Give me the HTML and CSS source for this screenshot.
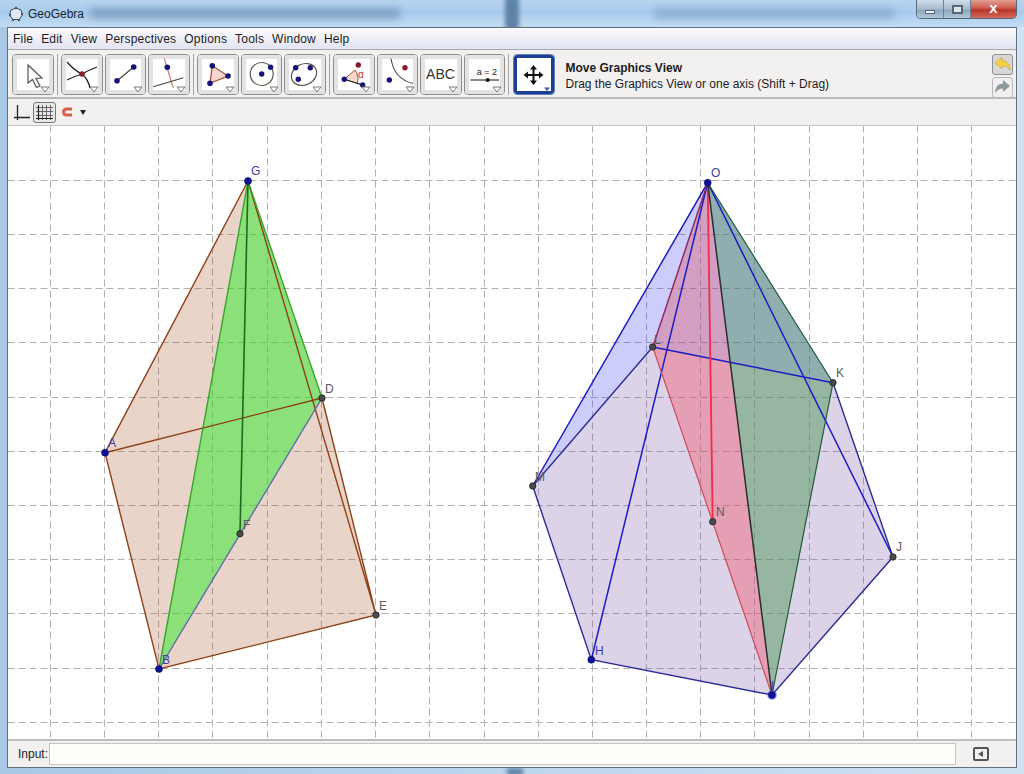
FILE: index.html
```html
<!DOCTYPE html>
<html lang="en">
<head>
  <meta charset="UTF-8">
  <title>GeoGebra</title>
  <link rel="stylesheet" href="styles.css">
</head>
<body>
  <div class="titlebar">
    <svg class="app-icon" width="16" height="16" viewBox="0 0 16 16">
      <path d="M8 2 L13 4 L14.5 9 L11 13.5 L5 13.5 L1.5 9 L3 4 Z" fill="#dfe8f2" stroke="#3c4a5c"/>
      <circle cx="8" cy="2" r="1.2" fill="#4a5a70"/><circle cx="14" cy="8" r="1.2" fill="#4a5a70"/>
      <circle cx="2" cy="9" r="1.2" fill="#4a5a70"/><circle cx="5" cy="14" r="1.2" fill="#4a5a70"/>
      <circle cx="11" cy="14" r="1.2" fill="#4a5a70"/>
    </svg>
    <span class="app-title">GeoGebra</span>
    <span class="smudge smudge-a"></span>
    <span class="stripe"></span>
    <span class="smudge smudge-b"></span>
    <div class="win-controls">
      <span class="win-btn win-min"><i></i></span>
      <span class="win-btn win-max"><i></i></span>
      <span class="win-btn win-close">x</span>
    </div>
  </div>

  <div class="frame">
    <div class="menubar">
      <span>File</span><span>Edit</span><span>View</span><span>Perspectives</span>
      <span>Options</span><span>Tools</span><span>Window</span><span>Help</span>
    </div>

    <div class="toolbar">
      <button class="tool"><svg viewBox="1 1 39.5 39">
        <path d="M16 11 V29 L20.5 25.5 L24.5 33.5 L28 32 L24 24.5 L30 24 Z" fill="#fff" stroke="#555" stroke-width="1.2"/>
        <polygon class="caret" points="29,33 37,33 33,38"/></svg></button>
      <span class="sep"></span>
      <button class="tool"><svg viewBox="1 1 39.5 39">
        <path d="M6 8 Q14 17 21 20 Q27 25 29 34" fill="none" stroke="#222" stroke-width="1.3"/>
        <path d="M6 26 Q14 22 21 20 Q28 16 36 13" fill="none" stroke="#222" stroke-width="1.3"/>
        <circle cx="21" cy="20" r="2.8" fill="#8c1c2c"/>
        <polygon class="caret" points="29,33 37,33 33,38"/></svg></button>
      <button class="tool"><svg viewBox="1 1 39.5 39">
        <path d="M12 26.7 L28.7 13" stroke="#444" stroke-width="1.2"/>
        <circle cx="12" cy="26.7" r="2.8" fill="#14147a"/><circle cx="28.7" cy="13" r="2.8" fill="#14147a"/>
        <polygon class="caret" points="29,33 37,33 33,38"/></svg></button>
      <button class="tool"><svg viewBox="1 1 39.5 39">
        <path d="M16.3 4.5 L25.3 34" stroke="#d68a80" stroke-width="1.3"/>
        <path d="M5.3 32.7 L35.3 23.7" stroke="#444" stroke-width="1.2"/>
        <circle cx="19.3" cy="13.3" r="2.8" fill="#14147a"/>
        <polygon class="caret" points="29,33 37,33 33,38"/></svg></button>
      <span class="sep"></span>
      <button class="tool"><svg viewBox="1 1 39.5 39">
        <polygon points="15.3,11.7 31,22 13,29.3" fill="#f6d6d0" stroke="#a8563c" stroke-width="1.3"/>
        <circle cx="15.3" cy="11.7" r="2.8" fill="#14147a"/><circle cx="31" cy="22" r="2.8" fill="#14147a"/>
        <circle cx="13" cy="29.3" r="2.8" fill="#14147a"/>
        <polygon class="caret" points="29,33 37,33 33,38"/></svg></button>
      <button class="tool"><svg viewBox="1 1 39.5 39">
        <circle cx="20.7" cy="20" r="11.5" fill="none" stroke="#5c5444" stroke-width="1.2"/>
        <circle cx="20.7" cy="20" r="2.7" fill="#14147a"/><circle cx="29.6" cy="13.3" r="2.7" fill="#14147a"/>
        <polygon class="caret" points="29,33 37,33 33,38"/></svg></button>
      <button class="tool"><svg viewBox="1 1 39.5 39">
        <ellipse cx="20" cy="20.5" rx="13" ry="10.5" transform="rotate(-25 20 20.5)" fill="none" stroke="#5c5444" stroke-width="1.2"/>
        <circle cx="11.7" cy="13.7" r="2.7" fill="#14147a"/><circle cx="26.3" cy="13.7" r="2.7" fill="#14147a"/>
        <circle cx="14.3" cy="25.3" r="2.7" fill="#14147a"/>
        <polygon class="caret" points="29,33 37,33 33,38"/></svg></button>
      <span class="sep"></span>
      <button class="tool"><svg viewBox="1 1 39.5 39">
        <path d="M11.3 25.3 L22 16 Q26 20 25 28 Z" fill="#f6d6d0" stroke="none"/>
        <path d="M29.7 31 L11.3 25.3 L22 16 M22 16 Q26 21 24.5 29" fill="none" stroke="#a8563c" stroke-width="1"/>
        <path d="M29.7 31 L11.3 25.3" stroke="#222" stroke-width="1.2"/>
        <circle cx="25.3" cy="11" r="2.7" fill="#8c1c2c"/><circle cx="11.3" cy="25.3" r="2.7" fill="#14147a"/>
        <circle cx="29.7" cy="31" r="2.7" fill="#14147a"/>
        <text class="icon-alpha" x="25" y="24">α</text>
        <polygon class="caret" points="29,33 37,33 33,38"/></svg></button>
      <button class="tool"><svg viewBox="1 1 39.5 39">
        <path d="M14 4.5 Q17 25 36 29.5" fill="none" stroke="#555" stroke-width="1.2"/>
        <circle cx="28" cy="13.7" r="2.7" fill="#8c1c2c"/><circle cx="12.3" cy="26" r="2.7" fill="#14147a"/>
        <polygon class="caret" points="29,33 37,33 33,38"/></svg></button>
      <button class="tool"><svg viewBox="1 1 39.5 39">
        <text class="icon-abc" x="20.5" y="25">ABC</text>
        <polygon class="caret" points="29,33 37,33 33,38"/></svg></button>
      <button class="tool"><svg viewBox="1 1 39.5 39">
        <text class="icon-num" x="23" y="21">a = 2</text>
        <path d="M6.5 26 H35" stroke="#111" stroke-width="1.2"/>
        <circle cx="23.7" cy="26" r="2" fill="#111"/>
        <polygon class="caret" points="29,33 37,33 33,38"/></svg></button>
      <span class="sep sep-last"></span>
      <button class="tool tool-active"><svg viewBox="4 4 33.5 33">
        <path d="M20.5 11 L24 15.5 H21.5 V20 H26 V17.5 L30.5 21 L26 24.5 V22 H21.5 V26.5 H24 L20.5 31 L17 26.5 H19.5 V22 H15 V24.5 L10.5 21 L15 17.5 V20 H19.5 V15.5 H17 Z" fill="#111"/>
        <polygon class="caret caret-active" points="31,33.5 37,33.5 34,37"/></svg></button>
      <div class="tool-help">
        <strong>Move Graphics View</strong>
        <span>Drag the Graphics View or one axis (Shift + Drag)</span>
      </div>
      <div class="undo-stack">
        <button class="undo-btn undo-on"><svg width="19" height="19" viewBox="0 0 19 19">
          <path d="M2 8 L9 2 V5.5 Q17 6 17 15 Q14 10.5 9 10.5 V14 Z" fill="#f2d13c" stroke="#c9a93a" stroke-width=".7"/></svg></button>
        <button class="undo-btn"><svg width="19" height="19" viewBox="0 0 19 19">
          <path d="M17 8 L10 2 V5.5 Q2 6 2 15 Q5 10.5 10 10.5 V14 Z" fill="#8d979c"/></svg></button>
      </div>
    </div>

    <div class="subbar">
      <svg class="axes-icon" width="18" height="18" viewBox="0 0 18 18">
        <path d="M4.5 2 V17 M1 14.5 H17" fill="none" stroke="#222" stroke-width="1.3"/>
      </svg>
      <span class="grid-toggle"><svg width="21" height="19" viewBox="0 0 21 19">
        <path d="M4.5 2 V17 M8.5 2 V17 M12.5 2 V17 M16.5 2 V17 M2 4.5 H19 M2 8.5 H19 M2 12.5 H19" fill="none" stroke="#666" stroke-width="1"/>
        <path d="M4.5 2 V17 M2 15.5 H19" fill="none" stroke="#222" stroke-width="1.2"/>
      </svg></span>
      <svg class="magnet-icon" width="12" height="10" viewBox="0 0 12 10">
        <path d="M11 2 H6 Q2.5 2 2.5 5 Q2.5 8 6 8 H11" fill="none" stroke="#d8604f" stroke-width="3"/>
      </svg>
      <span class="drop-arrow"></span>
    </div>

    <svg class="canvas" viewBox="8 126 1008 613">
      <g class="grid">
        <path d="M51 126V739M105 126V739M159 126V739M213 126V739M268 126V739M322 126V739M376 126V739M430 126V739M485 126V739M539 126V739M593 126V739M647 126V739M701 126V739M755 126V739M810 126V739M864 126V739M918 126V739M972 126V739"/>
        <path d="M8 181H1016M8 235H1016M8 289H1016M8 343H1016M8 398H1016M8 452H1016M8 506H1016M8 560H1016M8 614H1016M8 669H1016M8 723H1016"/>
      </g>

      <!-- left figure -->
      <polygon class="fill-peach" points="248,181 105,452.7 159,669 376,615 322,398"/>
      <polygon class="fill-green" points="248,181 322,398 159,669"/>
      <path class="edge-brown" d="M248 181L105 452.7L159 669L376 615L322 398M105 452.7L322 398M248 181L376 615"/>
      <path class="edge-green" d="M248 181L322 398M248 181L159 669"/>
      <path class="edge-slate" d="M322 398L159 669"/>
      <path class="edge-dkgreen" d="M248 181L240 533.7"/>

      <!-- right figure -->
      <polygon class="fill-lilac" points="532.7,486 591.3,659.7 772,695 893,557 833,382.7 652.7,347"/>
      <polygon class="fill-red" points="707.7,182.7 652.7,347 772,695"/>
      <polygon class="fill-teal" points="707.7,182.7 833,382.7 772,695"/>
      <polygon class="fill-blue" points="707.7,182.7 532.7,486 652.7,347"/>
      <polygon class="fill-shade" points="707.7,182.7 652.7,347 833,382.7"/>
      <path class="edge-navy" d="M532.7 486L652.7 347M532.7 486L591.3 659.7L772 695L893 557L833 382.7"/>
      <path class="edge-blue" d="M707.7 182.7L532.7 486M707.7 182.7L591.3 659.7M707.7 182.7L893 557M652.7 347L833 382.7"/>
      <path class="edge-plum" d="M707.7 182.7L652.7 347"/>
      <path class="edge-rose" d="M652.7 347L772 695"/>
      <path class="edge-red" d="M707.7 182.7L712.7 521.7"/>
      <path class="edge-black" d="M707.7 182.7L772 695"/>
      <path class="edge-teal" d="M707.7 182.7L833 382.7M833 382.7L772 695"/>

      <!-- points -->
      <circle class="pt-blue" cx="248" cy="181" r="3.5"/>
      <circle class="pt-blue" cx="105" cy="452.7" r="3.5"/>
      <circle class="pt-blue" cx="159" cy="669" r="3.5"/>
      <circle class="pt-grey" cx="322" cy="398" r="3.2"/>
      <circle class="pt-grey" cx="376" cy="615" r="3.2"/>
      <circle class="pt-grey" cx="240" cy="533.7" r="3.2"/>
      <circle class="pt-blue" cx="707.7" cy="182.7" r="3.5"/>
      <circle class="pt-blue" cx="591.3" cy="659.7" r="3.5"/>
      <circle class="pt-halo" cx="772" cy="695" r="5"/>
      <circle class="pt-blue" cx="772" cy="695" r="3.5"/>
      <circle class="pt-grey" cx="652.7" cy="347" r="3.2"/>
      <circle class="pt-grey" cx="833" cy="382.7" r="3.2"/>
      <circle class="pt-grey" cx="532.7" cy="486" r="3.2"/>
      <circle class="pt-grey" cx="712.7" cy="521.7" r="3.2"/>
      <circle class="pt-grey" cx="893" cy="557" r="3.2"/>

      <!-- labels -->
      <text class="lbl-blue" x="251" y="175">G</text>
      <text class="lbl-blue" x="108" y="447">A</text>
      <text class="lbl-blue" x="162" y="664">B</text>
      <text class="lbl-grey" x="325" y="393">D</text>
      <text class="lbl-grey" x="379" y="610">E</text>
      <text class="lbl-grey" x="243" y="529">F</text>
      <text class="lbl-blue" x="711" y="177">O</text>
      <text class="lbl-blue" x="595" y="655">H</text>
      <text class="lbl-blue" x="771" y="690">I</text>
      <text class="lbl-grey" x="654" y="344">L</text>
      <text class="lbl-grey" x="836" y="377">K</text>
      <text class="lbl-grey" x="535" y="481">M</text>
      <text class="lbl-grey" x="716" y="516">N</text>
      <text class="lbl-grey" x="896" y="551">J</text>
    </svg>

    <div class="inputbar">
      <label class="input-label" for="cmd">Input:</label>
      <input class="input-field" id="cmd" type="text">
      <span class="input-toggle"></span>
    </div>
  </div>
  <div class="bottom-edge"><span class="stripe-low"></span></div>
</body>
</html>
```

FILE: styles.css
```css
* {
  box-sizing: border-box;
}
html, body {
  margin: 0;
  height: 774px;
  overflow: hidden;
}
body {
  width: 1024px;
  font-family: "Liberation Sans", Arial, sans-serif;
  font-size: 12px;
  color: #1c1c1c;
  background: linear-gradient(90deg, #a9c8e6 0, #bcd6ee 50%, #cfe2f2 100%);
  display: flex;
  flex-direction: column;
}

/* title bar */
.titlebar {
  height: 27px;
  flex: none;
  display: flex;
  align-items: center;
  padding-left: 8px;
  background: linear-gradient(180deg, #b8d4ee 0, #a7cbee 45%, #c4dcf2 100%);
  overflow: hidden;
}
.app-icon {
  margin-right: 4px;
}
.app-title {
  color: #1a2430;
}
.smudge {
  height: 9px;
  background: #5b7ea2;
  filter: blur(4px);
  opacity: .65;
}
.smudge-a {
  width: 310px;
  margin-left: 6px;
}
.smudge-b {
  width: 240px;
  margin-left: 135px;
  opacity: .45;
}
.stripe {
  width: 14px;
  height: 34px;
  margin-left: 105px;
  background: #5f83a6;
  filter: blur(2px);
}
.win-controls {
  display: flex;
  height: 19px;
  width: 101px;
  margin-left: auto;
  margin-right: 7px;
  align-self: flex-start;
  border: 1px solid #55677a;
  border-top: 0;
  border-radius: 0 0 5px 5px;
  overflow: hidden;
}
.win-btn {
  display: flex;
  align-items: center;
  justify-content: center;
  width: 27px;
  background: linear-gradient(180deg, #cfdcea 0, #a9bccf 50%, #8fa6bc 55%, #b3c6d8 100%);
  border-right: 1px solid #6d8093;
}
.win-min i {
  display: block;
  width: 10px;
  height: 4px;
  margin-top: 6px;
  background: #eef3f8;
  border: 1px solid #55677a;
}
.win-max i {
  display: block;
  width: 11px;
  height: 9px;
  background: #dde6ef;
  border: 2px solid #55677a;
}
.win-close {
  flex: 1;
  border-right: 0;
  color: #fff;
  font-weight: bold;
  font-size: 15px;
  line-height: 14px;
  padding-bottom: 3px;
  background: linear-gradient(180deg, #e0a093 0, #cf5b4c 45%, #b8352a 55%, #d16a58 100%);
}

/* main window */
.frame {
  width: 1010px;
  height: 741px;
  flex: none;
  margin-left: 7px;
  display: flex;
  flex-direction: column;
  border: 1px solid #5f7080;
  background: #f2f1f0;
}
.menubar {
  height: 22px;
  flex: none;
  display: flex;
  align-items: center;
  gap: 8px;
  padding-left: 5px;
  letter-spacing: .2px;
  background: linear-gradient(180deg, #fbfbfd 0, #e3e4f2 100%);
  border-bottom: 1px solid #a4a8b0;
}
.toolbar {
  height: 49px;
  flex: none;
  display: flex;
  padding: 4px 3px 0 4px;
  border-bottom: 2px solid #b9b9b9;
}
.tool {
  width: 41.5px;
  height: 41px;
  padding: 0;
  border: 1px solid #8f8f8f;
  border-radius: 4px;
  background: #fff;
  overflow: hidden;
}
.tool + .tool {
  margin-left: 2px;
}
.tool svg {
  display: block;
  width: 39.5px;
  height: 39px;
  box-shadow: inset 0 0 0 4px #e3e3e3;
}
.tool-active {
  margin-left: 4px;
  border: 1px solid #5c7fae;
  background: #fff;
  box-shadow: inset 0 0 0 3px #1c3f94;
  padding: 3px;
}
.tool-active svg {
  width: 33.5px;
  height: 33px;
  box-shadow: none;
}
.caret {
  fill: #fff;
  stroke: #777;
  stroke-width: 1;
}
.caret-active {
  fill: #3c5ea8;
  stroke: none;
}
.sep {
  width: 1px;
  height: 41px;
  margin: 0 3.25px;
  background: #a8a8a8;
}
.sep-last {
  margin: 0 0 0 3px;
}
.icon-alpha {
  font-size: 10px;
  fill: #b8312c;
}
.icon-abc {
  font-size: 14px;
  fill: #333;
  text-anchor: middle;
}
.icon-num {
  font-size: 9px;
  fill: #222;
  text-anchor: middle;
}
.tool-help {
  display: flex;
  flex-direction: column;
  gap: 2px;
  margin: 7px 0 0 11px;
  line-height: 14px;
}
.undo-stack {
  display: flex;
  flex-direction: column;
  gap: 2px;
  margin-left: auto;
}
.undo-btn {
  width: 21px;
  height: 21px;
  padding: 0;
  border: 1px solid #b9b9b9;
  border-radius: 3px;
  background: #f0f0f0;
}
.undo-btn svg {
  display: block;
}
.undo-on {
  border-color: #909090;
  background: #d8d8d8;
}

.subbar {
  height: 27px;
  flex: none;
  display: flex;
  align-items: center;
  padding-left: 5px;
  border-bottom: 1px solid #c6c6c6;
}
.grid-toggle {
  display: flex;
  align-items: center;
  justify-content: center;
  width: 23px;
  height: 21px;
  margin-left: 2px;
  border: 1px solid #777;
  border-radius: 3px;
  background: #e8e8e8;
}
.magnet-icon {
  margin-left: 5px;
}
.drop-arrow {
  width: 0;
  height: 0;
  margin-left: 7px;
  border: 3px solid transparent;
  border-top: 5px solid #222;
  border-bottom: 0;
}

/* graphics view */
.canvas {
  display: block;
  width: 1008px;
  height: 613px;
  flex: none;
  background: #fff;
}
.grid {
  fill: none;
  stroke: #b0b0b0;
  stroke-width: 1;
  stroke-dasharray: 7 4;
  transform: translate(-.5px, -.5px);
}
.fill-peach { fill: #a45428; fill-opacity: .25; }
.fill-green { fill: #30ec2c; fill-opacity: .5; }
.fill-lilac { fill: #7450a4; fill-opacity: .25; }
.fill-red { fill: #f05369; fill-opacity: .4; }
.fill-teal { fill: #4f9a5c; fill-opacity: .5; }
.fill-blue { fill: #3838f0; fill-opacity: .25; }
.fill-shade { fill: #3838c0; fill-opacity: .2; }

.edge-brown { fill: none; stroke: #8e4016; stroke-width: 1.4; }
.edge-green { fill: none; stroke: #38a52c; stroke-width: 1.4; }
.edge-slate { fill: none; stroke: #5a6aa8; stroke-width: 1.4; }
.edge-dkgreen { fill: none; stroke: #1f6a1c; stroke-width: 1.6; }
.edge-navy { fill: none; stroke: #2c2c96; stroke-width: 1.4; }
.edge-blue { fill: none; stroke: #1c1cc4; stroke-width: 1.5; }
.edge-plum { fill: none; stroke: #8a2660; stroke-width: 1.4; }
.edge-rose { fill: none; stroke: #cf4a5c; stroke-width: 1.2; }
.edge-red { fill: none; stroke: #f02c48; stroke-width: 1.8; }
.edge-black { fill: none; stroke: #26302c; stroke-width: 1.5; }
.edge-teal { fill: none; stroke: #1f5a3a; stroke-width: 1.2; }

.pt-blue { fill: #10109c; stroke: #0c0c60; stroke-width: .6; }
.pt-grey { fill: #4a4a4a; stroke: #222; stroke-width: .8; }
.pt-halo { fill: #3c64e8; fill-opacity: .5; }
.lbl-blue { font-size: 12px; fill: #3c3ca8; }
.lbl-grey { font-size: 12px; fill: #5a5a5a; }

/* input row */
.inputbar {
  height: 27px;
  flex: 1;
  display: flex;
  align-items: center;
  padding-left: 10px;
  border-top: 2px solid #bdbdbd;
}
.input-label {
  width: 31px;
  flex: none;
}
.input-field {
  width: 907px;
  height: 22px;
  flex: none;
  border: 1px solid #c4c4c4;
  background: #fffefb;
}
.input-toggle {
  position: relative;
  width: 16px;
  height: 14px;
  margin-left: 17px;
  border: 2px solid #555;
  border-radius: 2px;
}
.input-toggle::after {
  content: "";
  position: absolute;
  left: 3px;
  top: 2px;
  border: 3px solid transparent;
  border-right: 5px solid #555;
  border-left: 0;
}
.bottom-edge {
  flex: 1;
  overflow: hidden;
}
.stripe-low {
  display: block;
  width: 16px;
  height: 8px;
  margin-left: 507px;
  background: #5f83a6;
  filter: blur(2px);
}
```
